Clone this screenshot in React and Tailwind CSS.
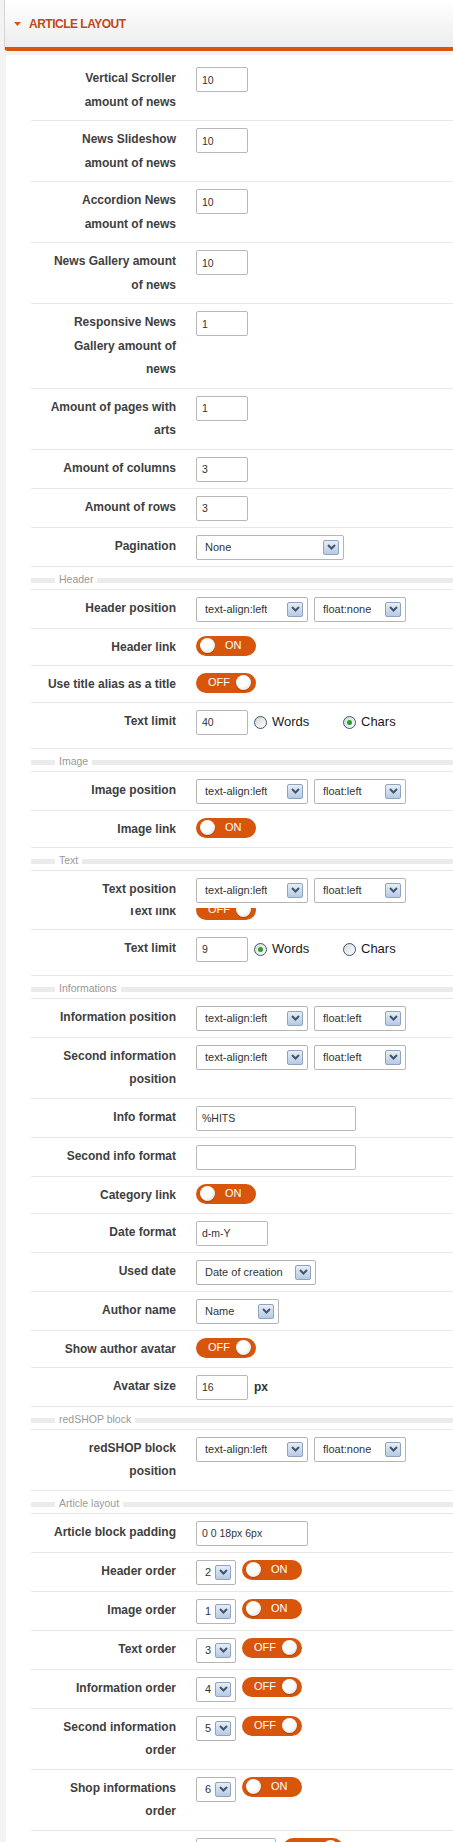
import React from 'react';

const Chevron = () => (
  <svg width="9" height="6" viewBox="0 0 9 6">
    <path d="M1 1l3.5 3.5L8 1" fill="none" stroke="#44546b" strokeWidth="2" />
  </svg>
);

const Select = ({ value, width }) => (
  <div className={`flex items-center justify-between shrink-0 h-[25px] pl-[8px] pr-[4px] border border-[#b5b5b5] rounded-[2px] bg-white text-[11px] text-[#333] ${width}`}>
    <span className="whitespace-nowrap overflow-hidden">{value}</span>
    <span className="flex items-center justify-center w-[16px] h-[15px] shrink-0 border border-[#8ea3c0] rounded-[2px] bg-gradient-to-b from-[#e6eef8] to-[#b7cae3]">
      <Chevron />
    </span>
  </div>
);

const TextInput = ({ value, width = 'w-[52px]' }) => (
  <input
    type="text"
    defaultValue={value}
    className={`h-[25px] shrink-0 px-[5px] border border-[#b8b8b8] rounded-[2px] bg-white text-[10.5px] text-[#333] outline-none ${width}`}
  />
);

const Knob = ({ className }) => (
  <span className={`w-[15px] h-[15px] rounded-full bg-[radial-gradient(circle_at_40%_35%,#ffffff_45%,#d2d2d2_100%)] shadow-[0_1px_1px_rgba(0,0,0,0.25)] ${className}`} />
);

const Toggle = ({ on }) => (
  <div className="flex items-center shrink-0 w-[60px] h-[20px] rounded-full bg-[#d8550c] text-[11px] text-white">
    {on ? (
      <>
        <Knob className="ml-[4px]" />
        <span className="ml-[10px]">ON</span>
      </>
    ) : (
      <>
        <span className="ml-[12px]">OFF</span>
        <Knob className="ml-auto mr-[5px]" />
      </>
    )}
  </div>
);

const Radio = ({ label, checked }) => (
  <div className="flex items-center w-[89px] gap-[5px]">
    <span className="flex items-center justify-center w-[13px] h-[13px] rounded-full border border-[#33587c] bg-gradient-to-br from-[#d6d6d0] to-white">
      {checked && <span className="w-[5px] h-[5px] rounded-full bg-[#27a327]" />}
    </span>
    <span className="text-[13px] text-[#1a1a1a]">{label}</span>
  </div>
);

const Label = ({ children }) => (
  <div className="w-[130px] ml-[15px] shrink-0 text-right text-[12px] font-bold leading-[23.5px] text-[#404040]">
    {children}
  </div>
);

const Row = ({ label, children, pb = 'pb-[6px]' }) => (
  <div className={`flex items-start ml-[25px] pt-[7px] border-b border-[#e8e8e8] ${pb}`}>
    <Label>{label}</Label>
    <div className="ml-[20px] flex items-start">{children}</div>
  </div>
);

const Legend = ({ title }) => (
  <div className="flex items-start h-[23px] ml-[25px] border-b border-[#e8e8e8]">
    <div className="w-[24px] h-[5px] mt-[11px] bg-[#ebebeb]" />
    <span className="px-[4px] mt-[5px] text-[10.5px] leading-[14px] text-[#999]">{title}</span>
    <div className="flex-1 h-[5px] mt-[11px] bg-[#ebebeb]" />
  </div>
);

const Position = ({ float }) => (
  <>
    <Select value="text-align:left" width="w-[112px]" />
    <div className="ml-[6px]">
      <Select value={float} width="w-[92px]" />
    </div>
  </>
);

const TextLimit = ({ value, words }) => (
  <>
    <TextInput value={value} />
    <div className="flex items-center h-[25px] ml-[6px]">
      <Radio label="Words" checked={words} />
      <Radio label="Chars" checked={!words} />
    </div>
  </>
);

const Order = ({ value, on, width = 'w-[40px]', gap = 'ml-[6px]' }) => (
  <>
    <Select value={value} width={width} />
    <div className={gap}>
      <Toggle on={on} />
    </div>
  </>
);

export default function App() {
  return (
    <div className="w-[453px] h-[1842px] overflow-hidden bg-[#f3f3f3] font-['Liberation_Sans',Arial,sans-serif]">
      {/* Panel header */}
      <div className="ml-[4px] h-[51px] flex items-center border-l border-[#d5d5d5] border-b-[4px] border-b-[#d8550c] rounded-bl-[4px] bg-gradient-to-b from-white to-[#ededed]">
        <svg width="7" height="4" viewBox="0 0 7 4" className="ml-[9px]">
          <polygon points="0,0 7,0 3.5,4" fill="#d8550c" />
        </svg>
        <span className="ml-[8px] text-[12px] font-bold uppercase tracking-[-0.5px] text-[#bf4a17]">Article layout</span>
      </div>

      {/* Settings */}
      <div className="ml-[6px] mt-[4px] pt-[5px] bg-white">
        <Row label="Vertical Scroller amount of news"><TextInput value="10" /></Row>
        <Row label="News Slideshow amount of news"><TextInput value="10" /></Row>
        <Row label="Accordion News amount of news"><TextInput value="10" /></Row>
        <Row label="News Gallery amount of news"><TextInput value="10" /></Row>
        <Row label="Responsive News Gallery amount of news"><TextInput value="1" /></Row>
        <Row label="Amount of pages with arts"><TextInput value="1" /></Row>
        <Row label="Amount of columns"><TextInput value="3" /></Row>
        <Row label="Amount of rows"><TextInput value="3" /></Row>
        <Row label="Pagination"><Select value="None" width="w-[148px]" /></Row>

        <Legend title="Header" />
        <Row label="Header position"><Position float="float:none" /></Row>
        <Row label="Header link" pb="pb-[5.5px]"><Toggle on /></Row>
        <Row label="Use title alias as a title" pb="pb-[5.5px]"><Toggle on={false} /></Row>
        <Row label="Text limit" pb="pb-[13px]"><TextLimit value="40" words={false} /></Row>

        <Legend title="Image" />
        <Row label="Image position"><Position float="float:left" /></Row>
        <Row label="Image link" pb="pb-[5.5px]"><Toggle on /></Row>

        <Legend title="Text" />
        {/* this row overlaps the top of the "Text link" row */}
        <div className="relative z-10 flex items-start ml-[25px] pt-[7px] pb-[5px] bg-white">
          <Label>Text position</Label>
          <div className="ml-[20px] flex items-start"><Position float="float:left" /></div>
        </div>
        <div className="-mt-[15px]">
          <Row label="Text link" pb="pb-[5.5px]"><Toggle on={false} /></Row>
        </div>
        <Row label="Text limit" pb="pb-[13px]"><TextLimit value="9" words /></Row>

        <Legend title="Informations" />
        <Row label="Information position"><Position float="float:left" /></Row>
        <Row label="Second information position"><Position float="float:left" /></Row>
        <Row label="Info format"><TextInput value="%HITS" width="w-[160px]" /></Row>
        <Row label="Second info format"><TextInput value="" width="w-[160px]" /></Row>
        <Row label="Category link" pb="pb-[5.5px]"><Toggle on /></Row>
        <Row label="Date format"><TextInput value="d-m-Y" width="w-[72px]" /></Row>
        <Row label="Used date"><Select value="Date of creation" width="w-[120px]" /></Row>
        <Row label="Author name"><Select value="Name" width="w-[83px]" /></Row>
        <Row label="Show author avatar" pb="pb-[5.5px]"><Toggle on={false} /></Row>
        <Row label="Avatar size">
          <TextInput value="16" />
          <span className="ml-[6px] text-[12px] font-bold leading-[25px] text-[#333]">px</span>
        </Row>

        <Legend title="redSHOP block" />
        <Row label="redSHOP block position"><Position float="float:none" /></Row>

        <Legend title="Article layout" />
        <Row label="Article block padding"><TextInput value="0 0 18px 6px" width="w-[112px]" /></Row>
        <Row label="Header order"><Order value="2" on /></Row>
        <Row label="Image order"><Order value="1" on /></Row>
        <Row label="Text order"><Order value="3" on={false} /></Row>
        <Row label="Information order"><Order value="4" on={false} /></Row>
        <Row label="Second information order"><Order value="5" on={false} /></Row>
        <Row label="Shop informations order"><Order value="6" on /></Row>
        <Row label="Readmore order"><Order value="7" on={false} width="w-[80px]" gap="ml-[7px]" /></Row>
      </div>
    </div>
  );
}
